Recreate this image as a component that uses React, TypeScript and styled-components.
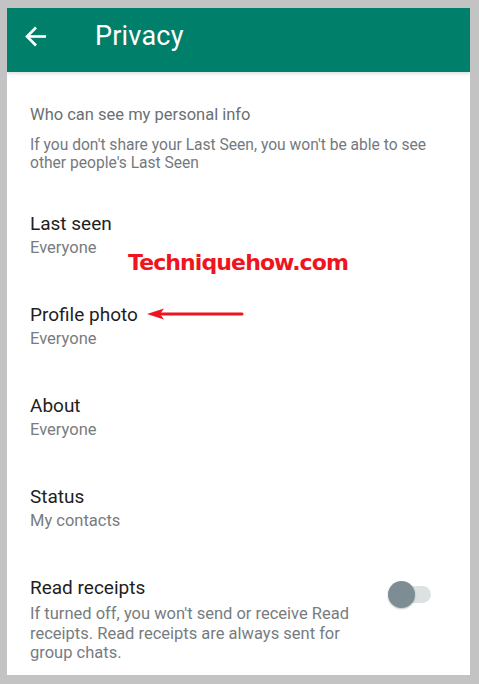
import styled, { createGlobalStyle } from 'styled-components';

const GlobalStyle = createGlobalStyle`
  html, body {
    margin: 0;
    padding: 0;
    background: #c3c3c3;
    font-family: Roboto, "Noto Sans", "Liberation Sans", sans-serif;
  }
`;

const Frame = styled.div`
  width: 479px;
  height: 684px;
  padding: 8px 9px 9px 7px;
  box-sizing: border-box;
`;

const Screen = styled.div`
  position: relative;
  width: 463px;
  height: 667px;
  background: #ffffff;
  overflow: hidden;
`;

const Toolbar = styled.header`
  height: 64px;
  background: #00806a;
  display: flex;
  align-items: center;
  padding: 0 0 8px 18px;
  box-sizing: border-box;
  box-shadow: 0 2px 3px rgba(0, 0, 0, 0.12);
  position: relative;
  z-index: 1;
`;

const BackButton = styled.button`
  border: none;
  background: none;
  padding: 0;
  width: 22px;
  height: 22px;
  display: flex;
  align-items: center;
  justify-content: center;
  margin-right: 48px;
`;

const Title = styled.h1`
  margin: 0;
  color: #ffffff;
  font-size: 27px;
  font-weight: 400;
  letter-spacing: 0.2px;
`;

const Intro = styled.section`
  padding: 33px 30px 19px 23px;
`;

const IntroTitle = styled.div`
  font-size: 16.5px;
  line-height: 20px;
  color: #6b6f73;
`;

const IntroText = styled.p`
  margin: 11px 0 0;
  font-size: 15.6px;
  line-height: 18px;
  color: #74797d;
`;

const Row = styled.div`
  display: flex;
  align-items: flex-start;
  padding: 21px 39px 22px 23px;
`;

const RowText = styled.div<{ $narrow?: boolean }>`
  flex: 1;
  max-width: ${(p) => (p.$narrow ? '352px' : 'none')};
`;

const RowTitle = styled.div`
  font-size: 19px;
  line-height: 24px;
  color: #1e1e1e;
`;

const RowValue = styled.div<{ $multi?: boolean }>`
  font-size: 16.5px;
  line-height: ${(p) => (p.$multi ? '19.6px' : '24px')};
  margin-top: ${(p) => (p.$multi ? '4px' : '0')};
  color: #777c80;
`;

const Switch = styled.div`
  position: relative;
  margin-left: auto;
  margin-top: 10px;
  width: 43px;
  height: 17px;
  display: flex;
  align-items: center;
  justify-content: flex-end;
`;

const Track = styled.div`
  width: 36px;
  height: 17px;
  border-radius: 9px;
  background: #dce2e2;
`;

const Thumb = styled.div`
  position: absolute;
  left: 0;
  top: -5px;
  width: 27px;
  height: 27px;
  border-radius: 50%;
  background: #7c8d94;
  box-shadow: 0 1px 2px rgba(0, 0, 0, 0.25);
`;

const Watermark = styled.div`
  position: absolute;
  left: 121px;
  top: 242px;
  font-family: "DejaVu Sans", Verdana, sans-serif;
  font-weight: 700;
  font-size: 22px;
  letter-spacing: -0.9px;
  color: #ee1520;
  pointer-events: none;
`;

const Pointer = styled.svg`
  position: absolute;
  left: 139px;
  top: 299px;
  pointer-events: none;
`;

const rows = [
  { title: 'Last seen', value: 'Everyone' },
  { title: 'Profile photo', value: 'Everyone' },
  { title: 'About', value: 'Everyone' },
  { title: 'Status', value: 'My contacts' },
];

export default function App() {
  return (
    <>
      <GlobalStyle />
      <Frame>
        <Screen>
          <Toolbar>
            <BackButton aria-label="Back">
              <svg width="22" height="21" viewBox="0 0 22 21" fill="none">
                <path d="M21 10.5H2.5" stroke="#fff" strokeWidth="2.6" />
                <path d="M11 1.5 2 10.5l9 9" stroke="#fff" strokeWidth="2.6" />
              </svg>
            </BackButton>
            <Title>Privacy</Title>
          </Toolbar>

          <Intro>
            <IntroTitle>Who can see my personal info</IntroTitle>
            <IntroText>
              If you don't share your Last Seen, you won't be able to see other people's Last Seen
            </IntroText>
          </Intro>

          {rows.map((r) => (
            <Row key={r.title}>
              <RowText>
                <RowTitle>{r.title}</RowTitle>
                <RowValue>{r.value}</RowValue>
              </RowText>
            </Row>
          ))}

          <Row>
            <RowText $narrow>
              <RowTitle>Read receipts</RowTitle>
              <RowValue $multi>
                If turned off, you won't send or receive Read receipts. Read receipts are always sent for group chats.
              </RowValue>
            </RowText>
            <Switch>
              <Track />
              <Thumb />
            </Switch>
          </Row>

          <Watermark>Techniquehow.com</Watermark>
          <Pointer width="98" height="14" viewBox="0 0 98 14">
            <path d="M14 7H96" stroke="#ee1520" strokeWidth="3" strokeLinecap="round" />
            <path d="M1 7 18 1.5 14 7 18 12.5Z" fill="#ee1520" />
          </Pointer>
        </Screen>
      </Frame>
    </>
  );
}
